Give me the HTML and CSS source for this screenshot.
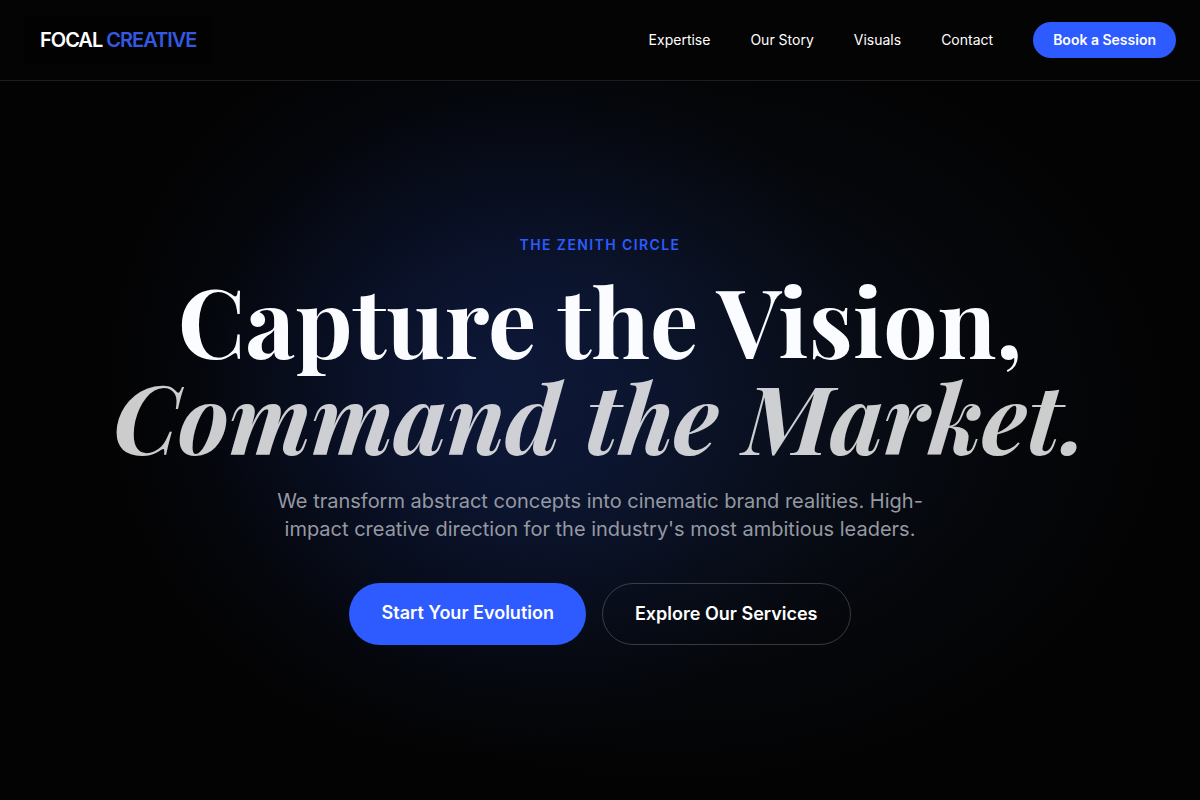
FILE: index.html
```html
<!DOCTYPE html>
<html lang="en">
<head>
    <meta charset="UTF-8">
    <meta name="viewport" content="width=device-width, initial-scale=1.0">
    <title>Focal Creative</title>
    <link rel="stylesheet" href="styles.css">
</head>
<body>
    <header class="header">
        <a href="#" class="logo">FOCAL <span>CREATIVE</span></a>
        <nav class="nav">
            <a href="#expertise">Expertise</a>
            <a href="#story">Our Story</a>
            <a href="#visuals">Visuals</a>
            <a href="#contact">Contact</a>
            <button type="button" class="book-btn">Book a Session</button>
        </nav>
    </header>

    <main class="hero">
        <p class="eyebrow">The Zenith Circle</p>
        <h1>Capture the Vision, <em>Command the Market.</em></h1>
        <p class="lead">We transform abstract concepts into cinematic brand realities. High-impact creative direction for the industry's most ambitious leaders.</p>
        <div class="actions">
            <a href="#contact" class="btn btn-primary">Start Your Evolution</a>
            <a href="#expertise" class="btn btn-outline">Explore Our Services</a>
        </div>
    </main>
</body>
</html>
```

FILE: styles.css
```css
* {
    box-sizing: border-box;
}
body {
    margin: 0;
    min-height: 100vh;
    display: flex;
    flex-direction: column;
    font-family: Inter, "Liberation Sans", sans-serif;
    color: #fff;
    background-color: #030303;
    background-image:
        radial-gradient(circle 380px at 40% 48%, rgba(45, 91, 255, 0.15), rgba(45, 91, 255, 0.11) 35%, rgba(45, 91, 255, 0.03) 75%, transparent),
        radial-gradient(ellipse 500px 380px at 56% 51%, rgba(50, 95, 190, 0.12), rgba(50, 95, 190, 0.1) 35%, rgba(50, 95, 190, 0.04) 70%, transparent);
}
a {
    color: inherit;
    text-decoration: none;
}

/* Header */
.header {
    display: flex;
    align-items: center;
    justify-content: space-between;
    padding: 16px 24px;
    background-color: #040404;
    border-bottom: 1px solid #1d1d1f;
}
.logo {
    padding: 0 16px;
    background-color: #020202;
    font-size: 20px;
    font-weight: 600;
    line-height: 48px;
    letter-spacing: -0.05em;
}
.logo span {
    color: #3459e0;
}
.nav {
    display: flex;
    align-items: center;
    gap: 40px;
    font-size: 14px;
    line-height: 20px;
}
.book-btn {
    padding: 8px 20px;
    border: none;
    border-radius: 18px;
    background-color: #2d5bff;
    color: #fff;
    font: inherit;
    font-weight: 600;
    cursor: pointer;
}

/* Hero */
.hero {
    flex: 1;
    display: flex;
    flex-direction: column;
    align-items: center;
    justify-content: center;
    padding: 0 24px 1px;
    text-align: center;
}
.eyebrow {
    margin: 0 0 16px;
    color: #2d5bff;
    font-size: 14px;
    font-weight: 600;
    line-height: 20px;
    letter-spacing: 0.1em;
    text-transform: uppercase;
}
h1 {
    margin: 0 0 24px;
    font-family: "Playfair Display", "Liberation Serif", serif;
    font-size: 96px;
    font-weight: 700;
    line-height: 96px;
    color: #fafcff;
}
h1 em {
    display: block;
    color: rgba(255, 255, 255, 0.8);
}
.lead {
    max-width: 672px;
    margin: 0 0 40px;
    color: #9599a2;
    font-size: 20px;
    line-height: 28px;
}
.actions {
    display: flex;
    flex-wrap: wrap;
    justify-content: center;
    gap: 16px;
}
.btn {
    padding: 16px 32px;
    border-radius: 31px;
    font-size: 18px;
    font-weight: 600;
    line-height: 28px;
}
.btn-primary {
    background-color: #2d5bff;
}
.btn-outline {
    border: 1px solid rgba(255, 255, 255, 0.2);
}
```
